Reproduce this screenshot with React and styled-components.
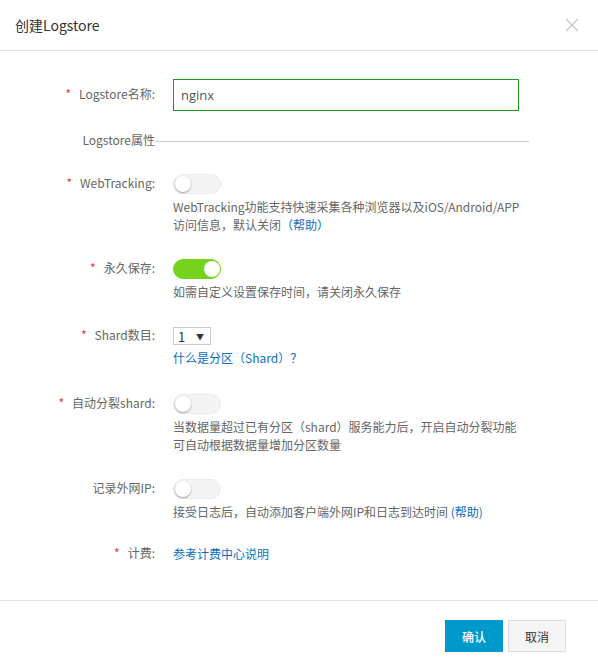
import React from "react";
import styled, { createGlobalStyle } from "styled-components";

const GlobalStyle = createGlobalStyle`
  body {
    margin: 0;
    background: #fff;
    font-family: "Noto Sans CJK SC", "Noto Sans", sans-serif;
    font-size: 12px;
    color: #666;
  }
`;

const Dialog = styled.div`
  width: 598px;
  height: 672px;
  background: #fff;
  box-sizing: border-box;
`;

const Header = styled.div`
  height: 50px;
  border-bottom: 1px solid #e5e5e5;
  padding: 0 19px 0 15px;
  display: flex;
  align-items: center;
  justify-content: space-between;
`;

const Title = styled.div`
  font-size: 14px;
  color: #333;
`;

const Close = styled.button`
  border: 0;
  background: none;
  padding: 0;
  width: 14px;
  height: 14px;
  display: flex;
  cursor: pointer;
`;

const Body = styled.div`
  padding: 28px 0 0;
  height: 521px;
`;

const Row = styled.div`
  display: flex;
  align-items: flex-start;
  margin-top: ${props => props.$top || 0}px;
`;

const Label = styled.div`
  width: 155px;
  flex-shrink: 0;
  text-align: right;
  line-height: ${props => props.$lh || 20}px;
  height: ${props => props.$lh || 20}px;
  margin-top: -1px;
  color: #666;
  white-space: nowrap;
`;

const Star = styled.span`
  color: #f23030;
  margin-right: 8px;
`;

const Field = styled.div`
  margin-left: 18px;
  display: flex;
  flex-direction: column;
  align-items: flex-start;
`;

const TextInput = styled.input`
  width: 346px;
  height: 32px;
  box-sizing: border-box;
  border: 1px solid #1e9a1e;
  outline: none;
  padding: 0 7px;
  font-family: "Open Sans", "Noto Sans CJK SC", sans-serif;
  font-size: 13px;
  color: #555;
`;

const SectionLine = styled.div`
  width: 374px;
  height: 1px;
  background: #ccc;
  margin-top: 9px;
`;

const Switch = styled.div`
  width: 48px;
  height: 20px;
  box-sizing: border-box;
  border-radius: 10px;
  position: relative;
  background: ${props => (props.$on ? "#75d31d" : "#f4f4f4")};
  border: 1px solid ${props => (props.$on ? "#75d31d" : "#ececec")};

  &::after {
    content: "";
    position: absolute;
    top: 1px;
    left: ${props => (props.$on ? "30px" : "1px")};
    width: 16px;
    height: 16px;
    border-radius: 50%;
    background: #fff;
    box-shadow: ${props => (props.$on ? "none" : "0 1px 2px rgba(0,0,0,0.35)")};
  }
`;

const Help = styled.div`
  margin-top: 4px;
  line-height: 18px;
  color: #666;
  white-space: nowrap;
`;

const HelpLine = styled.div`
  height: 18px;
`;

const Link = styled.a`
  color: #0a6dc4;
  text-decoration: none;
  line-height: 18px;
  height: 18px;
  margin-top: ${props => props.$top || 0}px;
  white-space: nowrap;
`;

const Select = styled.div`
  width: 38px;
  height: 18px;
  box-sizing: border-box;
  border: 1px solid #ccc;
  display: flex;
  align-items: center;
  justify-content: space-between;
  padding: 0 6px 0 4px;
  font-size: 13px;
  color: #333;
`;

const Caret = styled.span`
  font-size: 8px;
  color: #333;
`;

const Footer = styled.div`
  border-top: 1px solid #e5e5e5;
  padding: 19px 32px 0 0;
  display: flex;
  justify-content: flex-end;
  gap: 5px;
`;

const Button = styled.button`
  width: 58px;
  height: 32px;
  box-sizing: border-box;
  font-family: inherit;
  font-size: 12px;
  cursor: pointer;
  border: 1px solid ${props => (props.$primary ? "#0099cc" : "#dcdcdc")};
  background: ${props => (props.$primary ? "#0099cc" : "#f5f5f5")};
  color: ${props => (props.$primary ? "#fff" : "#333")};
  font-weight: ${props => (props.$primary ? 500 : 400)};
`;

const CloseIcon = () => (
  <svg width="14" height="14" viewBox="0 0 14 14">
    <path d="M1 1L13 13M13 1L1 13" stroke="#c8c8c8" strokeWidth="1.3" />
  </svg>
);

export default function App() {
  return (
    <Dialog>
      <GlobalStyle />
      <Header>
        <Title>创建Logstore</Title>
        <Close aria-label="close">
          <CloseIcon />
        </Close>
      </Header>
      <Body>
        <Row>
          <Label $lh={32}>
            <Star>*</Star>Logstore名称:
          </Label>
          <Field>
            <TextInput defaultValue="nginx" />
          </Field>
        </Row>

        <Row $top={21}>
          <Label $lh={18}>Logstore属性</Label>
          <SectionLine />
        </Row>

        <Row $top={25}>
          <Label>
            <Star>*</Star>WebTracking:
          </Label>
          <Field>
            <Switch />
            <Help>
              <HelpLine>WebTracking功能支持快速采集各种浏览器以及iOS/Android/APP</HelpLine>
              <HelpLine>
                访问信息，默认关闭<Link href="#">（帮助）</Link>
              </HelpLine>
            </Help>
          </Field>
        </Row>

        <Row $top={25}>
          <Label>
            <Star>*</Star>永久保存:
          </Label>
          <Field>
            <Switch $on />
            <Help>
              <HelpLine>如需自定义设置保存时间，请关闭永久保存</HelpLine>
            </Help>
          </Field>
        </Row>

        <Row $top={26}>
          <Label $lh={18}>
            <Star>*</Star>Shard数目:
          </Label>
          <Field>
            <Select>
              1<Caret>▼</Caret>
            </Select>
            <Link href="#" $top={4}>
              什么是分区（Shard）？
            </Link>
          </Field>
        </Row>

        <Row $top={27}>
          <Label>
            <Star>*</Star>自动分裂shard:
          </Label>
          <Field>
            <Switch />
            <Help>
              <HelpLine>当数据量超过已有分区（shard）服务能力后，开启自动分裂功能</HelpLine>
              <HelpLine>可自动根据数据量增加分区数量</HelpLine>
            </Help>
          </Field>
        </Row>

        <Row $top={25}>
          <Label>记录外网IP:</Label>
          <Field>
            <Switch />
            <Help>
              <HelpLine>
                接受日志后，自动添加客户端外网IP和日志到达时间 <Link href="#">(帮助)</Link>
              </HelpLine>
            </Help>
          </Field>
        </Row>

        <Row $top={24}>
          <Label $lh={18}>
            <Star>*</Star>计费:
          </Label>
          <Field>
            <Link href="#">参考计费中心说明</Link>
          </Field>
        </Row>
      </Body>
      <Footer>
        <Button $primary>确认</Button>
        <Button>取消</Button>
      </Footer>
    </Dialog>
  );
}
